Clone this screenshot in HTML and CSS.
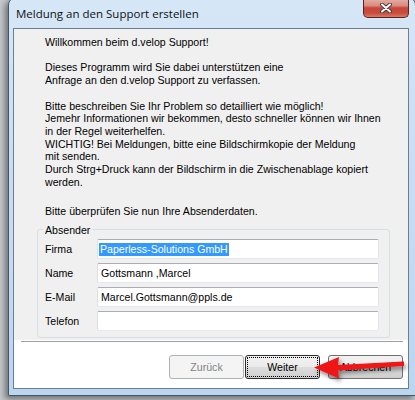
FILE: index.html
```html
<!DOCTYPE html>
<html lang="de">
<head>
  <meta charset="UTF-8">
  <meta name="viewport" content="width=device-width, initial-scale=1.0">
  <title>Meldung an den Support erstellen</title>
  <link rel="stylesheet" href="styles.css">
</head>
<body>
  <div class="window">
    <div class="titlebar">
      <span class="title">Meldung an den Support erstellen</span>
      <button class="close-button" title="Schließen">
        <svg width="12" height="10" viewBox="0 0 12 10">
          <path d="M2 1.5 L10 8.5 M10 1.5 L2 8.5" stroke="#3a3a3a" stroke-width="3.8" stroke-linecap="round"/>
          <path d="M2 1.5 L10 8.5 M10 1.5 L2 8.5" stroke="#ffffff" stroke-width="2" stroke-linecap="round"/>
        </svg>
      </button>
    </div>
    <div class="client">
      <div class="panel">
        <p class="intro">
          Willkommen beim d.velop Support!<br>
          <br>
          Dieses Programm wird Sie dabei unterstützen eine<br>
          Anfrage an den d.velop Support zu verfassen.<br>
          <br>
          Bitte beschreiben Sie Ihr Problem so detailliert wie möglich!<br>
          Jemehr Informationen wir bekommen, desto schneller können wir Ihnen<br>
          in der Regel weiterhelfen.<br>
          WICHTIG! Bei Meldungen, bitte eine Bildschirmkopie der Meldung<br>
          mit senden.<br>
          Durch Strg+Druck kann der Bildschirm in die Zwischenablage kopiert<br>
          werden.
        </p>
        <p class="check">Bitte überprüfen Sie nun Ihre Absenderdaten.</p>
        <fieldset class="sender">
          <legend>Absender</legend>
          <div class="row">
            <label>Firma</label>
            <div class="field"><span class="selected">Paperless-Solutions GmbH</span></div>
          </div>
          <div class="row">
            <label>Name</label>
            <div class="field"><span class="value">Gottsmann ,Marcel</span></div>
          </div>
          <div class="row">
            <label>E-Mail</label>
            <div class="field"><span class="value">Marcel.Gottsmann@ppls.de</span></div>
          </div>
          <div class="row">
            <label>Telefon</label>
            <div class="field"></div>
          </div>
        </fieldset>
      </div>
      <div class="separator"></div>
      <div class="buttons">
        <button class="btn" disabled>Zurück</button>
        <button class="btn default">Weiter</button>
        <button class="btn cancel">Abbrechen</button>
      </div>
    </div>
  </div>

  <!-- red annotation arrow pointing at "Weiter" -->
  <svg class="arrow" width="115" height="45" viewBox="0 0 115 45">
    <defs>
      <filter id="arrowShadow" x="-20%" y="-40%" width="140%" height="200%">
        <feDropShadow dx="2" dy="3" stdDeviation="2" flood-color="#000" flood-opacity="0.45"/>
      </filter>
    </defs>
    <polygon points="14,22.5 39,12 38,20 104,16.5 104,21 38,25.5 39,33.5" fill="#f01414" filter="url(#arrowShadow)"/>
  </svg>
</body>
</html>
```

FILE: styles.css
```css
/* Page */
body {
  margin: 0;
  height: 400px;
  overflow: hidden;
  background-color: #c6c9cc;
  font-family: "Liberation Sans", Arial, sans-serif;
  font-size: 10.6px;
  color: #000;
}

/* Window frame */
.window {
  width: 396px;
  margin: -3px 0 0 8px;
  padding: 0 6px 6px 4px;
  border: 1px solid #44566a;
  border-radius: 8px 8px 0 0;
  background: linear-gradient(#d6e7f7, #c9def3 40%, #bcd6f0);
  box-shadow: -3px 3px 6px rgba(0, 0, 0, 0.45);
}

.titlebar {
  display: flex;
  justify-content: space-between;
  align-items: flex-start;
  height: 30px;
}

.title {
  font-family: "Open Sans", "Noto Sans", sans-serif;
  font-size: 11.5px;
  line-height: 14px;
  margin: 9px 0 0 3px;
  color: #111;
}

.close-button {
  width: 46px;
  height: 20px;
  padding: 1px 0 0 0;
  border: 1px solid #5b2320;
  border-top: none;
  border-radius: 0 0 5px 5px;
  background: linear-gradient(#e6b3ab, #d98c80 40%, #c8463a 52%, #c94c3e 80%, #dc7a62);
  display: flex;
  align-items: center;
  justify-content: center;
}

/* Client area */
.client {
  border: 1px solid #6c7e90;
  background-color: #fff;
}

.panel {
  background-color: #f0f0f0;
  padding: 7px 0 2px 23px;
}

.intro {
  margin: 0 0 0 8px;
  line-height: 12.7px;
  white-space: nowrap;
}

.check {
  margin: 16.5px 0 0 8px;
  line-height: 12.7px;
}

/* Absender group */
.sender {
  margin: 6px 18px 0 0;
  padding: 3px 10px 6px 5px;
  min-width: 0;
  border: 1px solid #d5dfe5;
  border-radius: 3px;
}

.sender legend {
  padding: 0 2px;
  line-height: 12.7px;
}

.row {
  display: flex;
  align-items: center;
  height: 20px;
  padding-left: 2px;
}

.row + .row {
  margin-top: 4px;
}

.row label {
  width: 52px;
}

.field {
  flex: 1;
  height: 20px;
  box-sizing: border-box;
  border: 1px solid;
  border-color: #abadb3 #e2e3ea #e3e9ef #dbdfe6;
  border-radius: 2px;
  background-color: #fff;
  padding-left: 1px;
  display: flex;
  align-items: center;
}

.selected {
  background-color: #3399ff;
  color: #fff;
  padding: 0 1px;
  line-height: 13px;
}

.value {
  padding-left: 2px;
}

/* Bottom buttons */
.separator {
  border-top: 1px solid #a0a0a0;
  margin: 1px 5px 0 7px;
}

.buttons {
  display: flex;
  justify-content: flex-end;
  padding: 13px 5px 9px 0;
}

.btn {
  width: 75px;
  height: 24px;
  padding: 0;
  font-family: "Liberation Sans", Arial, sans-serif;
  font-size: 10.6px;
  color: #000;
  border: 1px solid #707070;
  border-radius: 3px;
  background: linear-gradient(#f2f2f2, #ebebeb 50%, #dddddd 50%, #cfcfcf);
}

.btn + .btn {
  margin-left: 1px;
}

.btn:disabled {
  border-color: #adb2b5;
  background: #f4f4f4;
  color: #838383;
}

.btn.default {
  border-color: #2c2c2c;
  outline: 1px dotted #000;
  outline-offset: -3px;
}

.btn.cancel {
  margin-left: 8px;
}

/* Annotation arrow */
.arrow {
  position: absolute;
  left: 300px;
  top: 345px;
  overflow: visible;
}
```
